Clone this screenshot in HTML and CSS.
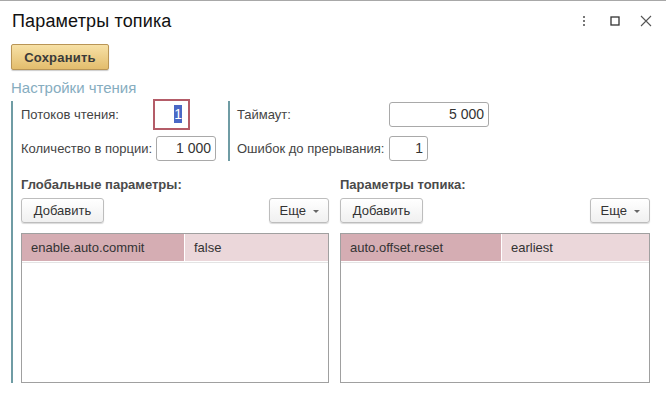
FILE: index.html
```html
<!DOCTYPE html>
<html lang="ru">
<head>
  <meta charset="UTF-8">
  <title>Параметры топика</title>
  <link rel="stylesheet" href="styles.css">
</head>
<body>
  <div class="window">
    <div class="header">
      <div class="title">Параметры топика</div>
      <div class="win-icons">
        <svg class="ico" width="12" height="12" viewBox="0 0 12 12">
          <rect x="5" y="1" width="2" height="2" fill="#777"/>
          <rect x="5" y="5" width="2" height="2" fill="#777"/>
          <rect x="5" y="9" width="2" height="2" fill="#777"/>
        </svg>
        <svg class="ico" width="12" height="12" viewBox="0 0 12 12">
          <rect x="2" y="2" width="8" height="8" fill="none" stroke="#333" stroke-width="1.3"/>
        </svg>
        <svg class="ico" width="12" height="12" viewBox="0 0 12 12">
          <path d="M1 1 L11 11 M11 1 L1 11" stroke="#555" stroke-width="1.1" fill="none"/>
        </svg>
      </div>
    </div>

    <div class="toolbar">
      <button class="btn-save">Сохранить</button>
    </div>

    <div class="group-title">Настройки чтения</div>
    <div class="group">
      <div class="params">
        <div class="col col-left">
          <div class="label">Потоков чтения:</div>
          <div class="field field-focus" style="width: 31px"><span class="sel">1</span></div>
          <div class="label">Количество в порции:</div>
          <div class="field" style="width: 60px">1 000</div>
        </div>
        <div class="col col-right">
          <div class="label">Таймаут:</div>
          <div class="field" style="width: 100px">5 000</div>
          <div class="label">Ошибок до прерывания:</div>
          <div class="field" style="width: 39px">1</div>
        </div>
      </div>

      <div class="panels">
        <div class="panel panel-left">
          <div class="panel-title">Глобальные параметры:</div>
          <div class="panel-bar">
            <button class="btn btn-add">Добавить</button>
            <button class="btn btn-more">Еще <span class="caret"></span></button>
          </div>
          <div class="table">
            <div class="row">
              <div class="cell cell-key" style="width: 163px">enable.auto.commit</div>
              <div class="cell cell-val">false</div>
            </div>
          </div>
        </div>
        <div class="panel">
          <div class="panel-title">Параметры топика:</div>
          <div class="panel-bar">
            <button class="btn btn-add">Добавить</button>
            <button class="btn btn-more">Еще <span class="caret"></span></button>
          </div>
          <div class="table">
            <div class="row">
              <div class="cell cell-key" style="width: 161px">auto.offset.reset</div>
              <div class="cell cell-val">earliest</div>
            </div>
          </div>
        </div>
      </div>
    </div>
  </div>
</body>
</html>
```

FILE: styles.css
```css
body {
  margin: 0;
  background: #fff;
  font-family: "Liberation Sans", Arial, sans-serif;
  font-size: 13px;
  color: #404040;
}

.window {
  border-top: 1px solid #a8a8a8;
  height: 394px;
  overflow: hidden;
}

.header {
  display: flex;
  align-items: center;
  justify-content: space-between;
  height: 43px;
  padding: 0 12px;
  box-sizing: border-box;
  padding-bottom: 3px;
}

.title {
  font-size: 18px;
  line-height: 20px;
  color: #111;
  letter-spacing: 0.15px;
}

.win-icons {
  display: flex;
  align-items: center;
  gap: 19px;
  margin-right: 2px;
}

.ico {
  display: block;
}

.toolbar {
  padding: 0 11px;
}

.btn-save {
  display: block;
  width: 98px;
  height: 26px;
  font-family: inherit;
  font-size: 13px;
  font-weight: bold;
  color: #3a3a3a;
  background: linear-gradient(#f7e1a6, #e3bd6d);
  border: 1px solid #b99556;
  border-radius: 2px;
  box-shadow: 0 1px 1px rgba(0, 0, 0, 0.2);
  padding: 0;
  letter-spacing: 0.2px;
}

.group-title {
  margin: 10px 0 0 11px;
  font-size: 15px;
  line-height: 16px;
  color: #86adbf;
}

.group {
  margin: 5px 16px 0 11px;
  border-left: 2px solid #6f9ca4;
  padding-left: 8px;
  height: 282px;
}

.params {
  display: flex;
}

.col {
  display: grid;
  grid-template-rows: 25px 25px;
  row-gap: 9px;
  align-items: center;
  padding-top: 1px;
}

.col-left {
  grid-template-columns: 135px auto;
  width: 207px;
}

.col-right {
  grid-template-columns: 152px auto;
  border-left: 2px solid #6f9ca4;
  padding-left: 7px;
}

.label {
  color: #444;
}

.field {
  height: 25px;
  box-sizing: border-box;
  border: 1px solid #a9a9a9;
  border-radius: 3px;
  text-align: right;
  padding: 0 4px;
  line-height: 23px;
  color: #333;
  font-size: 14px;
}

.field-focus {
  border-color: #fff;
  border-radius: 0;
  outline: 2px solid #b45c68;
  outline-offset: 1px;
}

.sel {
  background: #4a68c6;
  color: #fff;
  padding: 1px 0;
}

.panels {
  display: flex;
  gap: 11px;
  margin-top: 16px;
}

.panel {
  flex: 1;
}

.panel-left {
  flex: 0 0 308px;
}

.panel-title {
  font-weight: bold;
  line-height: 16px;
  color: #4a4a4a;
}

.panel-bar {
  display: flex;
  justify-content: space-between;
  margin-top: 5px;
}

.btn {
  height: 25px;
  font-family: inherit;
  font-size: 13px;
  color: #333;
  background: linear-gradient(#ffffff, #f0f0f0);
  border: 1px solid #bdbdbd;
  border-radius: 3px;
  box-shadow: 0 1px 1px rgba(0, 0, 0, 0.15);
  padding: 0;
}

.btn-add {
  width: 83px;
}

.btn-more {
  width: 60px;
}

.caret {
  display: inline-block;
  width: 0;
  height: 0;
  border-left: 3px solid transparent;
  border-right: 3px solid transparent;
  border-top: 3px solid #666;
  vertical-align: middle;
  margin-left: 3px;
}

.table {
  margin-top: 10px;
  height: 150px;
  box-sizing: border-box;
  border: 1px solid #a0a0a0;
}

.row {
  display: flex;
  height: 27px;
  border-bottom: 1px solid #fff;
  box-shadow: 0 1px 0 #e4e4e4;
}

.cell {
  line-height: 27px;
  padding-left: 9px;
  box-sizing: border-box;
  color: #333;
}

.cell-key {
  background: #d5adb3;
  border-right: 1px solid #fff;
}

.cell-val {
  flex: 1;
  background: #ebd7da;
}
```
